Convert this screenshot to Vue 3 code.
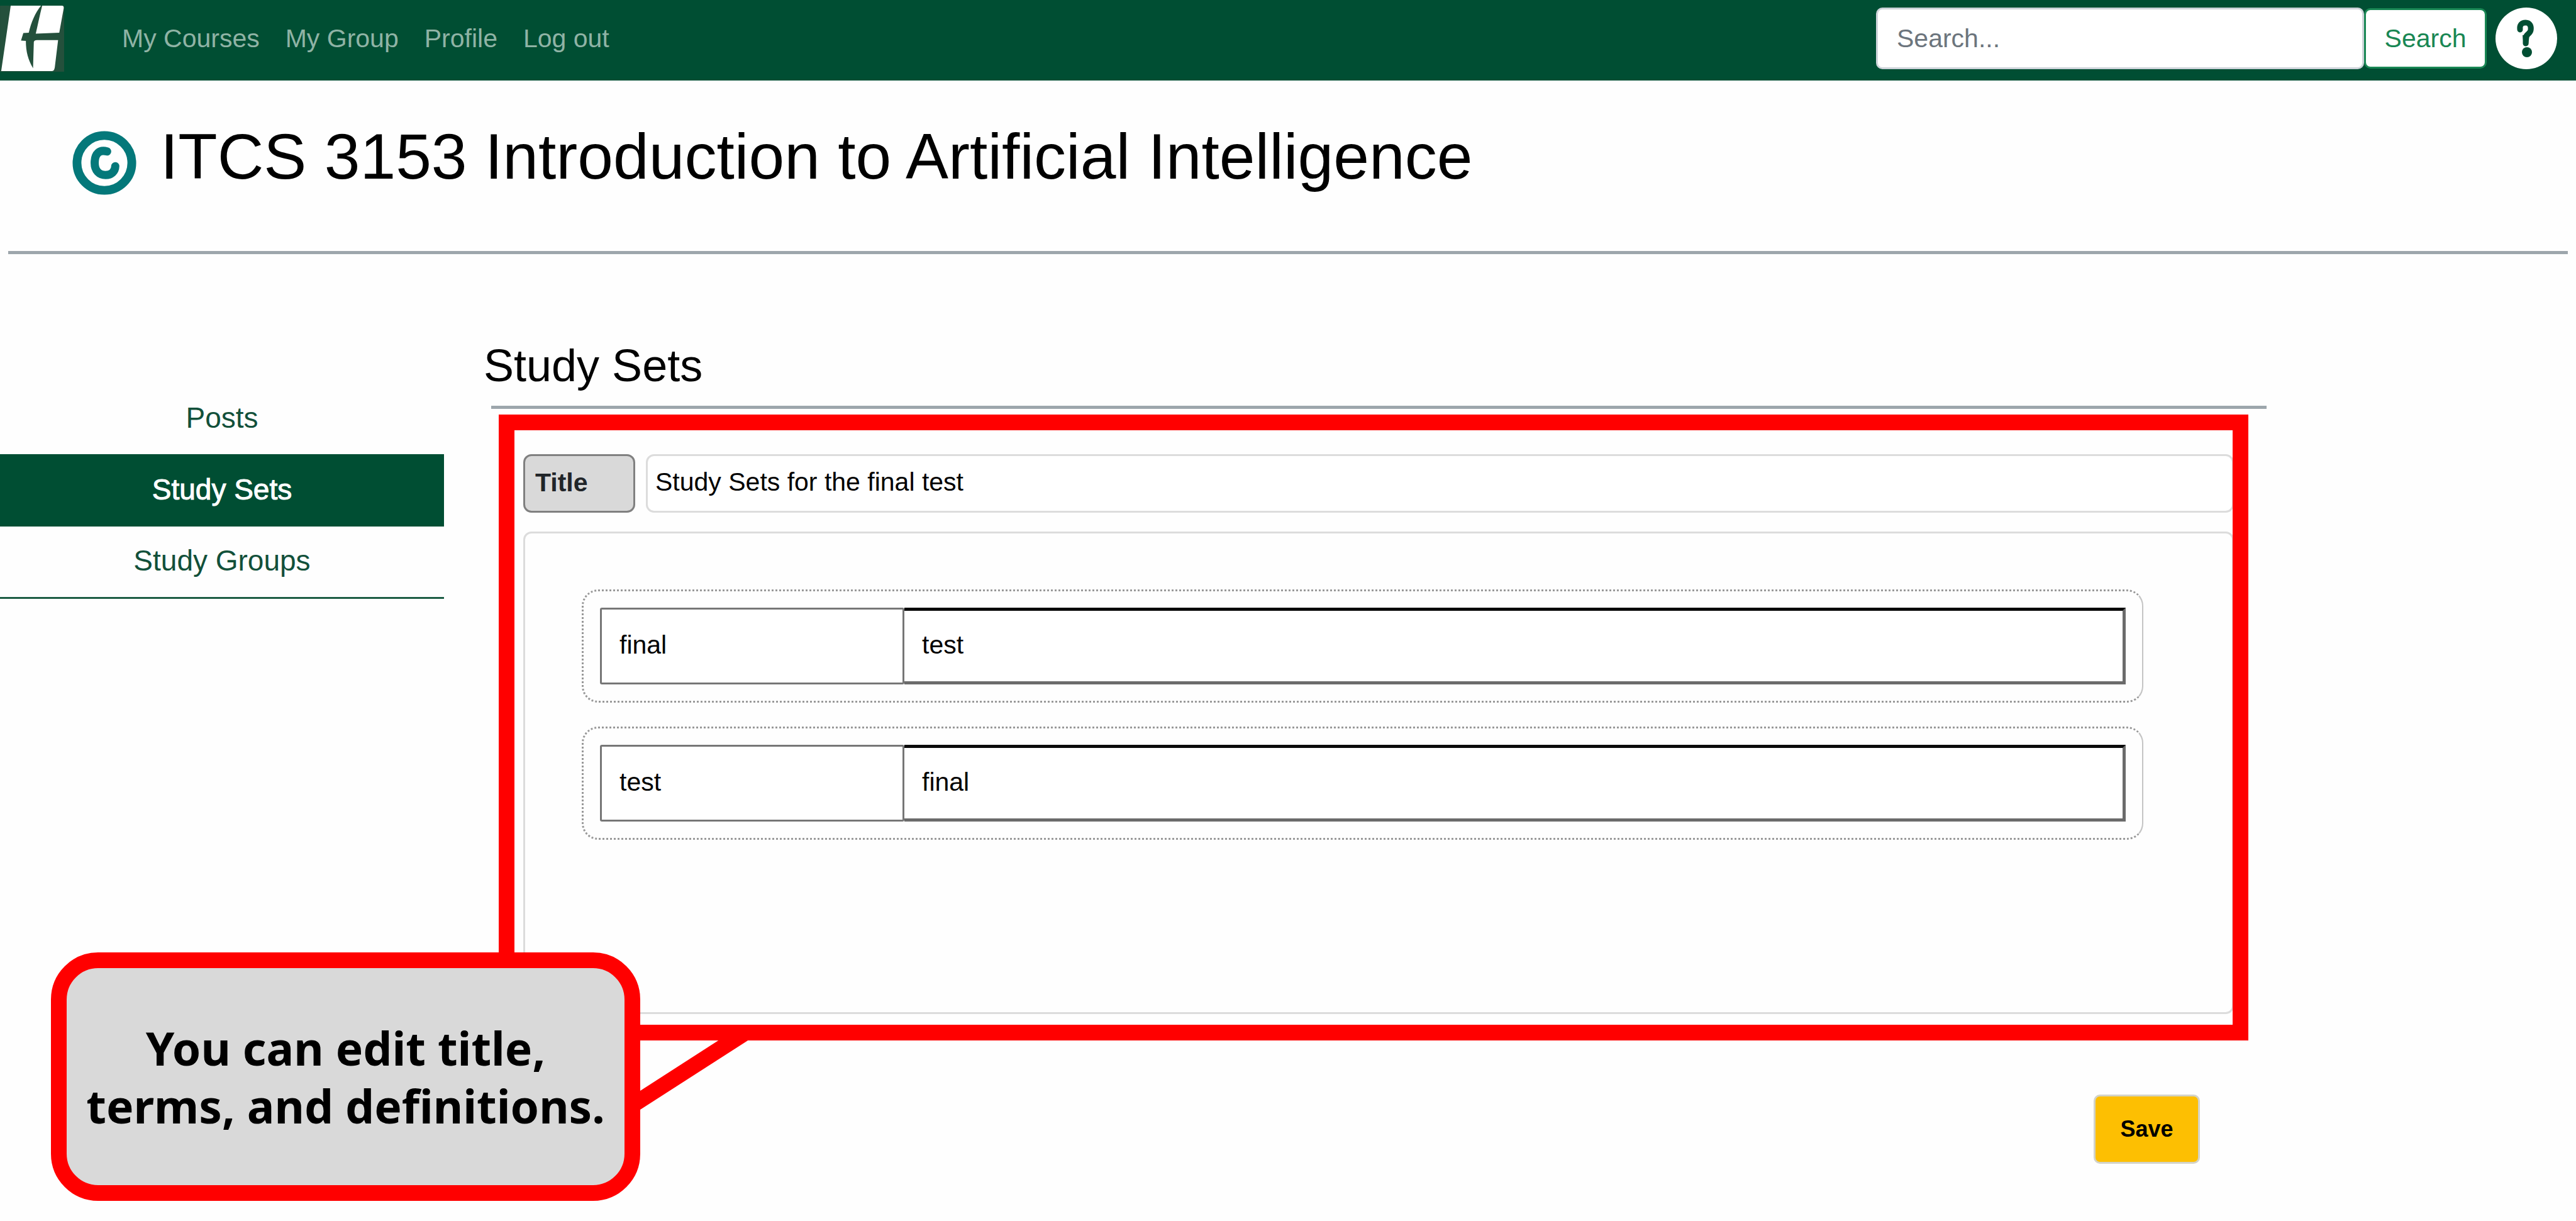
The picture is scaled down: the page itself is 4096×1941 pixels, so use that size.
<script setup>
import { ref } from 'vue'

const navLinks = ['My Courses', 'My Group', 'Profile', 'Log out']
const sections = [
  { name: 'Posts', active: false },
  { name: 'Study Sets', active: true },
  { name: 'Study Groups', active: false },
]
const query = ref('')
const title = ref('Study Sets for the final test')
const cards = ref([
  { term: 'final', definition: 'test' },
  { term: 'test', definition: 'final' },
])
</script>

<template>
  <div class="page">
    <header class="navbar">
      <a class="brand" href="#" aria-label="Home">
        <svg class="logo" viewBox="0 33 330 340" aria-hidden="true">
          <rect x="0" y="33" width="330" height="340" fill="#24503c" />
          <path fill="#fff" d="M55 33H211C181 70 160 120 148 172L120 174L108 213L133 214C133 270 145 312 170 355L174 220Q176 210 190 210L299 210L282 350Q279 370 266 370H6Z" />
          <path fill="#fff" d="M217 33H318Q329 33 328 46L305 172L184 177C195 130 205 80 217 33Z" />
        </svg>
      </a>
      <nav class="nav-links">
        <a v-for="link in navLinks" :key="link" href="#">{{ link }}</a>
      </nav>
      <form class="search" role="search" @submit.prevent>
        <input v-model="query" type="text" placeholder="Search..." aria-label="Search" />
        <button type="submit">Search</button>
      </form>
      <a class="help" href="#" aria-label="Help">
        <svg viewBox="0 0 98 98" aria-hidden="true">
          <circle cx="49" cy="49" r="49" fill="#fff" />
          <path fill="none" stroke="#004e33" stroke-width="9" stroke-linecap="round" stroke-linejoin="round" d="M39 35C38 27 42 24 48 24C55 24 57 30 56 36C55 42 49 42 48 48L48 57" />
          <path fill="#004e33" d="M43 44L54 43L52 60H45Z" />
          <circle cx="50" cy="71" r="8" fill="#004e33" />
        </svg>
      </a>
    </header>

    <div class="course">
      <svg class="course-icon" viewBox="370 663 328 330" aria-hidden="true">
        <circle cx="534" cy="828" r="141" fill="none" stroke="#04787a" stroke-width="45" />
        <path fill="none" stroke="#04787a" stroke-width="42" stroke-linecap="round" d="M548 769C508 758 484 780 484 828C484 868 508 890 540 890C570 890 589 872 590 845" />
      </svg>
      <h1>ITCS 3153 Introduction to Artificial Intelligence</h1>
    </div>
    <hr class="rule page-rule" />

    <div class="body">
      <nav class="sidebar">
        <a v-for="s in sections" :key="s.name" href="#" :class="{ active: s.active }">{{ s.name }}</a>
      </nav>

      <main class="content">
        <h2>Study Sets</h2>
        <hr class="rule section-rule" />

        <form class="editor" @submit.prevent>
          <div class="fields">
            <div class="title-row">
              <label for="set-title">Title</label>
              <input id="set-title" v-model="title" type="text" />
            </div>
            <div class="panel">
              <div v-for="(card, i) in cards" :key="i" class="card">
                <input v-model="card.term" class="term" type="text" :aria-label="`Term ${i + 1}`" />
                <input v-model="card.definition" class="definition" type="text" :aria-label="`Definition ${i + 1}`" />
              </div>
            </div>
            <div class="highlight"></div>
            <div class="callout">
              <p>You can edit title,<br />terms, and definitions.</p>
              <svg class="tail" viewBox="0 0 193 124" aria-hidden="true">
                <polygon points="0,94 146,0 193,0 0,124" fill="#f00" />
              </svg>
            </div>
          </div>
          <button class="save" type="submit">Save</button>
        </form>
      </main>
    </div>
  </div>
</template>

<style>
body {
  margin: 0;
  background: #fefefe;
}
</style>

<style scoped>
.page,
.page * {
  box-sizing: border-box;
}

.page {
  min-height: 100vh;
  font-family: "Liberation Sans", Arial, sans-serif;
  font-size: 41px;
  color: #000;
}

a {
  text-decoration: none;
}

input,
button {
  font: inherit;
  color: inherit;
  margin: 0;
}

.navbar {
  display: flex;
  align-items: center;
  height: 128px;
  padding: 0 30px 6px 0;
  background: #004e33;
}

.logo {
  display: block;
  width: 102px;
  height: 105px;
}

.nav-links {
  display: flex;
  gap: 41px;
  margin-left: 92px;
}

.nav-links a {
  color: #8fb3a5;
}

.search {
  display: flex;
  align-items: center;
  margin-left: auto;
}

.search input {
  width: 776px;
  height: 98px;
  padding: 0 30px;
  border: 3px solid #ced4da;
  border-radius: 10px;
  background: #fff;
}

.search input::placeholder {
  color: #6c757d;
  opacity: 1;
}

.search button {
  width: 195px;
  height: 96px;
  padding: 0;
  border: 3px solid #198754;
  border-radius: 10px;
  background: #fff;
  color: #198754;
}

.help {
  margin-left: 14px;
}

.help svg {
  display: block;
  width: 98px;
  height: 98px;
}

.course {
  display: flex;
  align-items: flex-end;
  gap: 38px;
  padding: 60px 115px 89px;
}

.course-icon {
  width: 102px;
  height: 102px;
}

h1 {
  margin: 0;
  font-size: 102px;
  line-height: 122px;
  font-weight: 400;
}

.rule {
  height: 5px;
  border: 0;
  background: #9da6ac;
}

.page-rule {
  margin: 0 13px;
}

.body {
  display: grid;
  grid-template-columns: 706px 1fr;
  align-items: start;
}

.sidebar {
  display: flex;
  flex-direction: column;
  margin-top: 206px;
  border-bottom: 3px solid #1b5c43;
  font-size: 46px;
}

.sidebar a {
  display: flex;
  align-items: center;
  justify-content: center;
  height: 112px;
  padding-bottom: 4px;
  color: #12503a;
}

.sidebar a.active {
  height: 115px;
  background: #004e33;
  color: #fff;
  -webkit-text-stroke: 1px #fff;
}

.content {
  padding: 134px 492px 91px 63px;
}

h2 {
  margin: 0;
  font-size: 72px;
  line-height: 86px;
  font-weight: 400;
}

.section-rule {
  margin: 21px 0 0 12px;
}

.editor {
  display: flex;
  flex-direction: column;
  gap: 128px;
  margin: 72px 52px 0 63px;
}

.fields {
  position: relative;
}

.title-row {
  display: flex;
  gap: 17px;
}

.title-row label {
  width: 178px;
  height: 93px;
  padding-left: 16px;
  border: 3px solid #808080;
  border-radius: 13px;
  background: #d9d9d9;
  color: #212529;
  font-weight: 700;
  line-height: 84px;
}

.title-row input {
  flex: 1;
  min-width: 0;
  height: 93px;
  padding: 0 12px 4px;
  border: 3px solid #dcdcdc;
  border-radius: 13px;
  background: #fff;
}

.panel {
  display: flex;
  flex-direction: column;
  gap: 38px;
  min-height: 767px;
  margin-top: 30px;
  padding: 89px 141px 89px 90px;
  border: 3px solid #dcdcdc;
  border-radius: 13px;
}

.card {
  display: flex;
  padding: 26px;
  border: 3px dotted #999;
  border-right: 2px solid #c4c4c4;
  border-radius: 26px;
}

.card input {
  height: 122px;
  background: #fff;
}

.term {
  width: 484px;
  padding: 0 28px 4px;
  border: 3px solid #767676;
  border-radius: 3px;
}

.definition {
  flex: 1;
  min-width: 0;
  padding: 0 28px 4px;
  border-style: solid;
  border-width: 5px 5px 5px 0;
  border-color: #0a0a0a #6b6b6b #6b6b6b;
}

.highlight {
  position: absolute;
  inset: -63px -23px -42px -39px;
  border: 25px solid #f00;
  pointer-events: none;
}

.callout {
  position: absolute;
  left: -751px;
  top: 792px;
  width: 937px;
}

.callout p {
  display: flex;
  align-items: center;
  justify-content: center;
  height: 395px;
  margin: 0;
  border: 25px solid #f00;
  border-radius: 75px;
  background: #d9d9d9;
  font-family: "Noto Sans", "Open Sans", sans-serif;
  font-size: 73px;
  line-height: 92px;
  font-weight: 700;
  text-align: center;
  white-space: nowrap;
}

.tail {
  position: absolute;
  left: 100%;
  top: 126px;
  width: 193px;
  height: 124px;
}

.save {
  align-self: flex-end;
  width: 169px;
  height: 110px;
  margin-right: 54px;
  padding: 0;
  border: 3px solid #d3d3c8;
  border-radius: 10px;
  background: #fdbf02;
  font-size: 36px;
  font-weight: 700;
}
</style>
